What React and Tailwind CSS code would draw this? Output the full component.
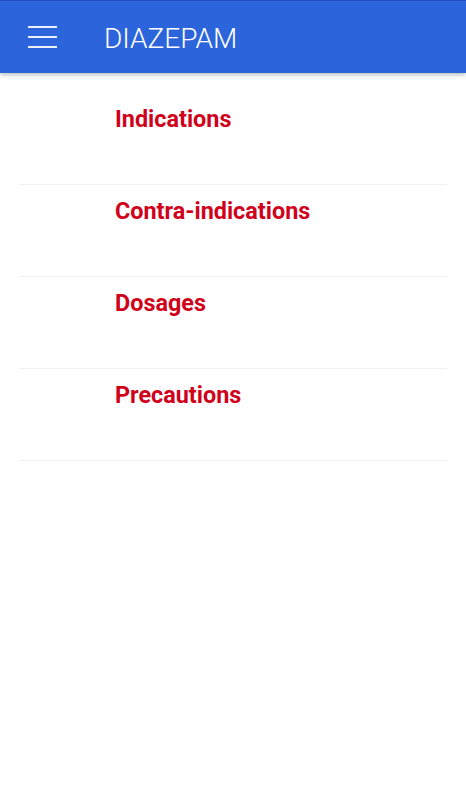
export default function App() {
  const sections = ['Indications', 'Contra-indications', 'Dosages', 'Precautions']

  return (
    <div className="min-h-screen bg-white" style={{ fontFamily: 'Roboto, "Noto Sans", sans-serif' }}>
      {/* App bar */}
      <header className="relative z-10 h-[73px] bg-[#2c64dc] border-t border-[#1f4fb8] flex items-center shadow-[0_2px_4px_rgba(0,0,0,0.25)]">
        <button className="ml-[28px] w-[29px] flex flex-col gap-[8px]">
          <span className="block h-[2px] bg-white/90" />
          <span className="block h-[2px] bg-white/90" />
          <span className="block h-[2px] bg-white/90" />
        </button>
        <h1 className="ml-[47px] mt-[3px] text-[28px] font-light text-white">DIAZEPAM</h1>
      </header>

      {/* Sections */}
      <ul className="mx-[19px] mt-[20px] w-[428px]">
        {sections.map((s) => (
          <li key={s} className="h-[92px] border-b border-[#f0f0f0] pl-[96px] pt-[9px]">
            <span className="text-[23.4px] font-bold text-[#d0021b]">{s}</span>
          </li>
        ))}
      </ul>
    </div>
  )
}
